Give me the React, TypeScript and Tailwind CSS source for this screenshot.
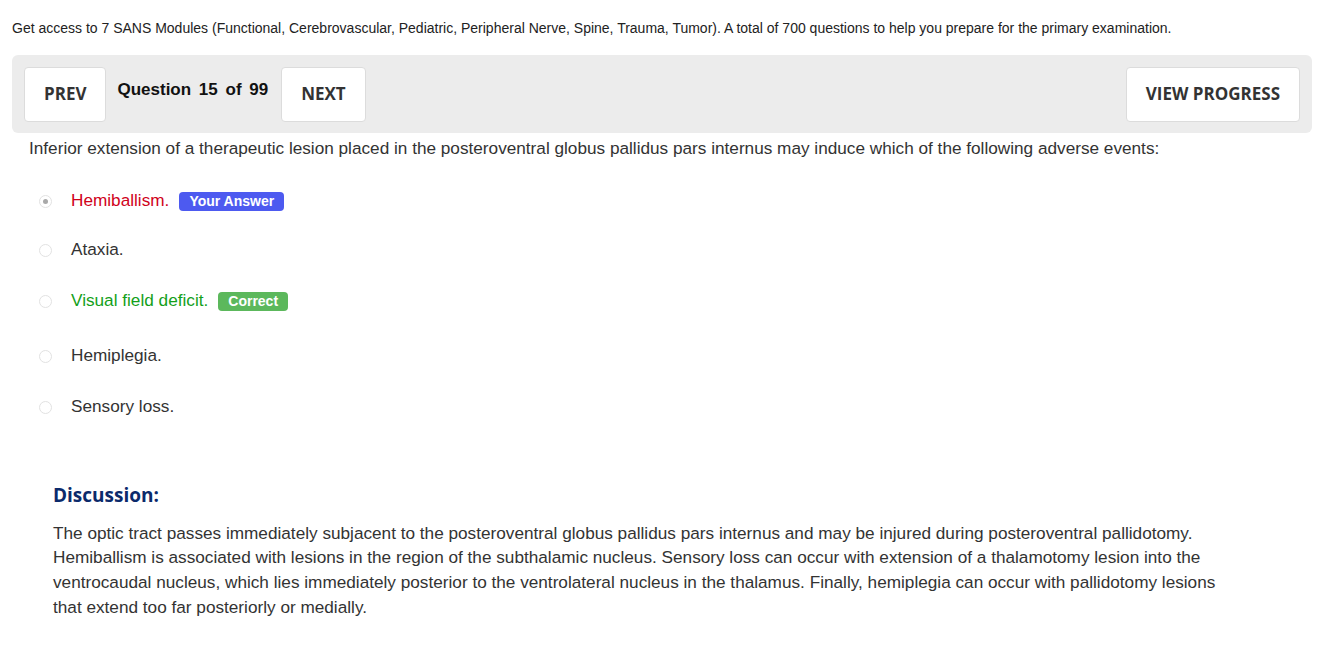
import React from 'react';

const options = [
    { text: 'Hemiballism.', tone: 'text-[#d0021b]', badge: 'Your Answer', badgeCls: 'bg-[#4d5af0]', picked: true, gap: 'mt-0' },
    { text: 'Ataxia.', tone: 'text-[#333]', gap: 'mt-[27px]' },
    { text: 'Visual field deficit.', tone: 'text-[#13a01a]', badge: 'Correct', badgeCls: 'bg-[#5cb85c]', gap: 'mt-[29px]' },
    { text: 'Hemiplegia.', tone: 'text-[#333]', gap: 'mt-[33px]' },
    { text: 'Sensory loss.', tone: 'text-[#333]', gap: 'mt-[29px]' },
];

const navBtn = "h-[55px] bg-white border border-[#dcdcdc] rounded-[4px] px-[19px] text-[17px] font-bold text-[#333] font-['Open_Sans',sans-serif] flex items-center";

export default function App() {
    return (
        <div className="bg-white min-h-[652px] font-['Liberation_Sans',Arial,sans-serif] text-[#333]">
            <p className="pl-[12px] pt-[19px] text-[14px] leading-[18px] text-[#222]">
                Get access to 7 SANS Modules (Functional, Cerebrovascular, Pediatric, Peripheral Nerve, Spine, Trauma, Tumor). A total of 700 questions to help you prepare for the primary examination.
            </p>

            {/* nav bar */}
            <div className="mx-[12px] w-[1300px] mt-[18px] h-[78px] bg-[#ececec] rounded-[6px] flex items-center px-[12px]">
                <button className={navBtn}>PREV</button>
                <div className="ml-[11px] self-start mt-[22px] text-[17px] font-bold text-[#111] [word-spacing:3px]">Question 15 of 99</div>
                <button className={`${navBtn} ml-[13px]`}>NEXT</button>
                <button className={`${navBtn} ml-auto`}>VIEW PROGRESS</button>
            </div>

            <p className="pl-[29px] mt-[4px] text-[17.2px] leading-[22px] text-[#333]">
                Inferior extension of a therapeutic lesion placed in the posteroventral globus pallidus pars internus may induce which of the following adverse events:
            </p>

            <div className="mt-[31px]">
                {options.map(o => (
                    <div key={o.text} className={`flex items-center h-[22px] pl-[39px] ${o.gap}`}>
                        <span className="w-[13px] h-[13px] rounded-full border border-[#e2e2e2] bg-white flex items-center justify-center">
                            {o.picked && <span className="w-[5px] h-[5px] rounded-full bg-[#a9a9a9]" />}
                        </span>
                        <span className={`ml-[19px] text-[17.2px] ${o.tone}`}>{o.text}</span>
                        {o.badge && (
                            <span className={`ml-[10px] ${o.badgeCls} text-white text-[14px] font-bold leading-[19px] px-[10px] rounded-[4px]`}>{o.badge}</span>
                        )}
                    </div>
                ))}
            </div>

            <div className="pl-[53px] pr-[100px] mt-[63px]">
                <h3 className="font-['Open_Sans',sans-serif] font-bold text-[19px] text-[#0b2a6b]">Discussion:</h3>
                <p className="mt-[11px] text-[17.2px] leading-[24.7px] text-[#333] max-w-[1170px]">
                    The optic tract passes immediately subjacent to the posteroventral globus pallidus pars internus and may be injured during posteroventral pallidotomy. Hemiballism is associated with lesions in the region of the subthalamic nucleus. Sensory loss can occur with extension of a thalamotomy lesion into the ventrocaudal nucleus, which lies immediately posterior to the ventrolateral nucleus in the thalamus. Finally, hemiplegia can occur with pallidotomy lesions that extend too far posteriorly or medially.
                </p>
            </div>
        </div>
    );
}
